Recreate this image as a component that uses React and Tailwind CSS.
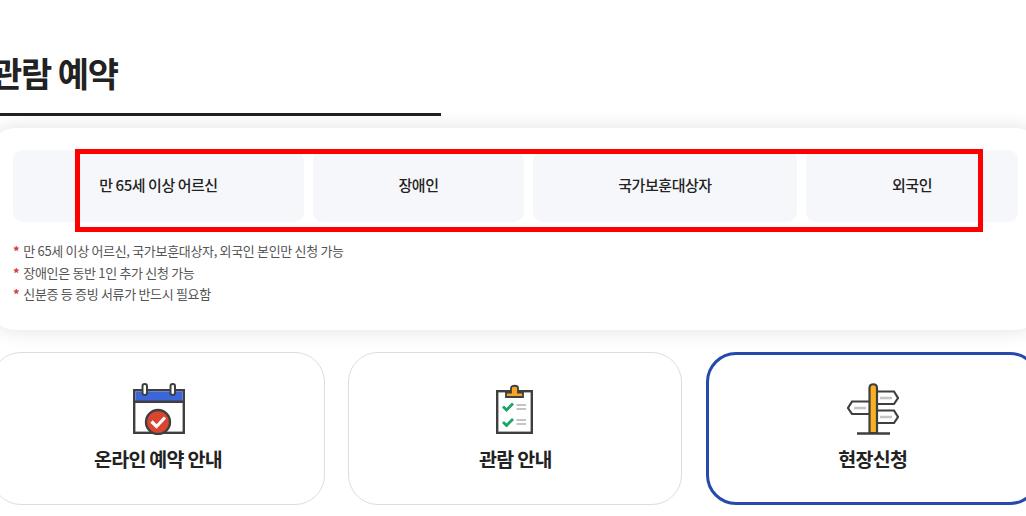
const font = { fontFamily: '"Noto Sans CJK KR", "Noto Sans", sans-serif' };

function CalendarIcon() {
  return (
    <svg width="52" height="52" viewBox="0 0 52 52" fill="none" className="ml-[1px]">
      <rect x="1.200" y="7.200" width="49.600" height="42.600" fill="#fff" stroke="#3f3f3f" strokeWidth="2.400" />
      <rect x="2.400" y="8.400" width="47.200" height="10" fill="#3c66d8" />
      <path d="M1 18.800H51" stroke="#3f3f3f" strokeWidth="2.400" />
      <rect x="9.500" y="1" width="4.500" height="11" rx="2.200" fill="#fff" stroke="#3f3f3f" strokeWidth="2" />
      <rect x="37.500" y="1" width="4.500" height="11" rx="2.200" fill="#fff" stroke="#3f3f3f" strokeWidth="2" />
      <circle cx="25" cy="39" r="12" fill="#d9452e" stroke="#3f3f3f" strokeWidth="2.400" />
      <path d="M18.500 38.500L23.500 43.500L32 34.500" stroke="#fff" strokeWidth="3.200" />
    </svg>
  );
}

function ClipboardIcon() {
  return (
    <svg width="38" height="52" viewBox="0 0 38 52" fill="none">
      <rect x="1.200" y="8.200" width="34.600" height="41.600" fill="#fff" stroke="#3f3f3f" strokeWidth="2.400" />
      <path d="M10 14V9.500H15V5C15 2 22 2 22 5V9.500H27V14Z" fill="#f5a623" stroke="#3f3f3f" strokeWidth="1.800" />
      <path d="M7 23.500L10.500 27L17 20.500" stroke="#18a566" strokeWidth="2.800" />
      <path d="M7 39L10.500 42.500L17 36" stroke="#18a566" strokeWidth="2.800" />
      <path d="M20.500 22H30M20.500 26H30M20.500 37H30M20.500 41H30" stroke="#c4c4c4" strokeWidth="2" />
    </svg>
  );
}

function SignIcon() {
  return (
    <svg width="52" height="52" viewBox="0 0 52 52" fill="none">
      <path d="M28 8.500H47L51 15L47 21H28Z" fill="#fff" stroke="#3f3f3f" strokeWidth="2.200" />
      <path d="M28 27.500H47L51 34L47 40H28Z" fill="#fff" stroke="#3f3f3f" strokeWidth="2.200" />
      <path d="M24 18.500H5L1 25L5 31H24Z" fill="#fff" stroke="#3f3f3f" strokeWidth="2.200" />
      <path d="M33 15H45M33 34H45M7 25H19" stroke="#c4c4c4" strokeWidth="2.400" />
      <path d="M22.500 50V5C22.500 0 30 0 30 5V50Z" fill="#f9b021" stroke="#3f3f3f" strokeWidth="2.200" />
      <path d="M10 50.500H43" stroke="#3f3f3f" strokeWidth="2.400" />
    </svg>
  );
}

const tabs = [
  ["만 65세 이상 어르신", "w-[291px]"],
  ["장애인", "w-[211px]"],
  ["국가보훈대상자", "w-[264px]"],
  ["외국인", "w-[212px]"],
];

const notes = [
  "만 65세 이상 어르신, 국가보훈대상자, 외국인 본인만 신청 가능",
  "장애인은 동반 1인 추가 신청 가능",
  "신분증 등 증빙 서류가 반드시 필요함",
];

function LinkCard({ icon, label, active }) {
  return (
    <div
      className={
        "w-[334px] h-[153px] shrink-0 rounded-[30px] bg-white flex flex-col items-center " +
        (active ? "border-[3px] border-[#2549ad] pt-[28px]" : "border border-[#dddddd] pt-[30px]")
      }
    >
      <div className="h-[52px] flex items-center justify-center">{icon}</div>
      <div className="mt-[10px] text-[19.500px] leading-[28px] font-bold text-[#222] tracking-[-0.7px]">{label}</div>
    </div>
  );
}

export default function App() {
  return (
    <div className="relative w-[1026px] h-[516px] overflow-hidden bg-white" style={font}>
      <div className="-ml-[9px] w-[1049px] pt-[47px]">
        <div className="w-[450px] h-[69px] border-b-[3px] border-[#222] pt-[2px]">
          <h1 className="text-[34px] leading-[48px] font-bold text-[#222] tracking-[-1.2px]">관람 예약</h1>
        </div>
        <div className="mt-[12px] h-[202px] rounded-[24px] bg-white shadow-[0_0_20px_rgba(0,0,0,0.12)] pt-[22px] px-[22px]">
          <div className="flex gap-[9px]">
            {tabs.map(([t, w]) => (
              <div
                key={t}
                className={
                  w +
                  " h-[72px] rounded-[10px] bg-[#f6f7fb] flex items-center justify-center pb-[2px] text-[15px] font-medium text-[#222] tracking-[-0.45px]"
                }
              >
                {t}
              </div>
            ))}
          </div>
          <ul className="mt-[18px] text-[13px] leading-[21.600px] text-[#555] tracking-[-0.32px]">
            {notes.map((n) => (
              <li key={n} className="flex gap-[4px]">
                <span className="text-[#d8383a] font-bold">*</span>
                <span>{n}</span>
              </li>
            ))}
          </ul>
        </div>
        <div className="mt-[22px] flex gap-[23.400px]">
          <LinkCard icon={<CalendarIcon />} label="온라인 예약 안내" />
          <LinkCard icon={<ClipboardIcon />} label="관람 안내" />
          <LinkCard icon={<SignIcon />} label="현장신청" active />
        </div>
      </div>
      <div className="absolute left-[75px] top-[149px] w-[908px] h-[83px] border-[5px] border-[#ff0000]" />
    </div>
  );
}
